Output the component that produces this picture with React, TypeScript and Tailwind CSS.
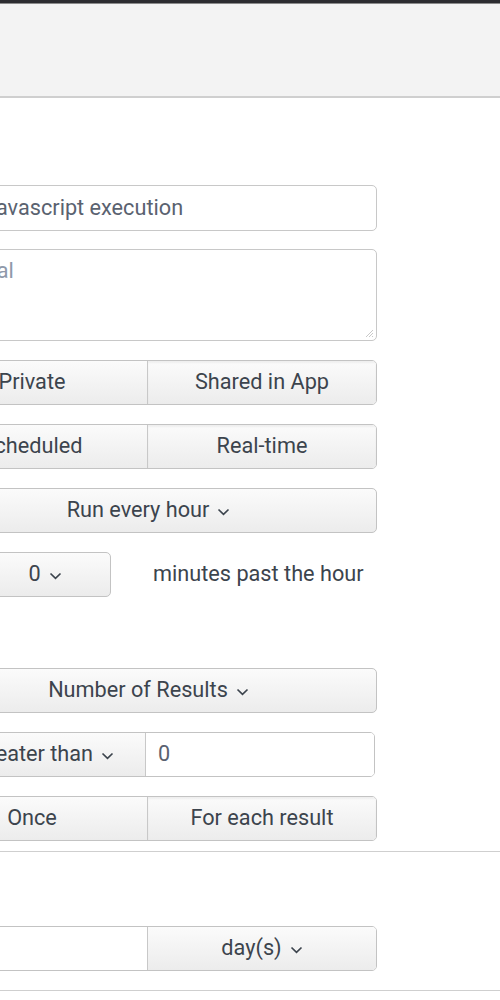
const Chevron = () => (
  <svg width="13" height="8" viewBox="0 0 13 8" className="ml-[8px] mt-[2px]">
    <path d="M1.5 1.5 L6.5 6.3 L11.5 1.5" fill="none" stroke="#3c444d" strokeWidth="1.7" />
  </svg>
);

const face = "flex items-center justify-center bg-linear-to-b from-[#fbfbfb] to-[#ececec] text-[#3c444d]";

const Group = ({ left, right }: { left: string; right: string }) => (
  <div className="flex h-[45px] border border-[#c3c3c3] rounded-[5px] overflow-hidden">
    <div className={`${face} h-full w-[227px] pr-[4px] border-r border-[#c8c8c8]`}>{left}</div>
    <div className={`${face} h-full flex-1 shadow-[inset_0_2px_2px_rgba(0,0,0,0.05)]`}>{right}</div>
  </div>
);

const Dropdown = ({ label, className }: { label: string; className: string }) => (
  <div className={`${face} h-[45px] border border-[#c3c3c3] rounded-[5px] ${className}`}>
    {label}
    <Chevron />
  </div>
);

export default function App() {
  return (
    <div
      className="w-[500px] h-[1000px] overflow-hidden bg-white text-[21.7px] text-[#3c444d]"
      style={{ fontFamily: "Roboto, 'Liberation Sans', sans-serif" }}
    >
      <div className="h-[3px] bg-[#2c2c30]" />
      <div className="h-[95px] bg-[#f3f3f3] border-t border-[#8a8a8a] border-b-2 border-b-[#cfcfcf]" />

      <div className="ml-[-80px] w-[457px] flex flex-col">
        <div className="mt-[87px] h-[46px] border border-[#c8c8c8] rounded-[5px] bg-white flex items-center pl-[63px] text-[#5a6270]">
          Javascript execution
        </div>

        <div className="relative mt-[18px] h-[92px] border border-[#c8c8c8] rounded-[5px] bg-white pl-[12px] pt-[5px] text-[#8f99aa]">
          Optional
          <svg width="10" height="10" viewBox="0 0 10 10" className="absolute right-[2px] bottom-[2px]">
            <path d="M9 2 L2 9 M9 5 L5 9 M9 8 L8 9" stroke="#c9c9c9" strokeWidth="1" />
          </svg>
        </div>

        <div className="mt-[19px]">
          <Group left="Private" right="Shared in App" />
        </div>
        <div className="mt-[19px]">
          <Group left="Scheduled" right="Real-time" />
        </div>
        <div className="mt-[19px]">
          <Dropdown label="Run every hour" className="w-full" />
        </div>
        <div className="mt-[19px] flex items-center">
          <Dropdown label="0" className="ml-[59px] w-[132px]" />
          <span className="ml-[42px]">minutes past the hour</span>
        </div>

        <div className="mt-[71px]">
          <Dropdown label="Number of Results" className="w-full" />
        </div>
        <div className="mt-[19px] flex h-[45px] w-[455px] border border-[#c3c3c3] rounded-[5px] overflow-hidden">
          <div className={`${face} h-full w-[225px] border-r border-[#c8c8c8]`}>
            is Greater than
            <Chevron />
          </div>
          <div className="flex-1 flex items-center bg-white pl-[12px] text-[#5a6270]">0</div>
        </div>
        <div className="mt-[19px]">
          <Group left="Once" right="For each result" />
        </div>
      </div>

      <div className="mt-[10px] border-t border-[#cfcfcf]" />

      <div className="ml-[-80px] w-[457px] mt-[74px] flex h-[45px] border border-[#c3c3c3] rounded-[5px] overflow-hidden">
        <div className="w-[227px] bg-white border-r border-[#c8c8c8]" />
        <div className={`${face} h-full flex-1`}>
          day(s)
          <Chevron />
        </div>
      </div>

      <div className="mt-[19px] border-t border-[#cfcfcf]" />
    </div>
  );
}
